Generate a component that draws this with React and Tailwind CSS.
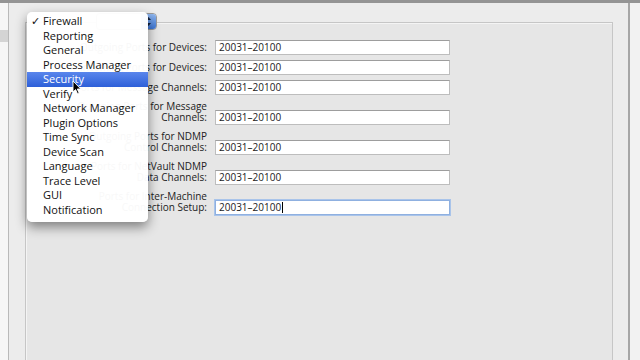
import React from "react";

const rows = [
  { label: ["Outgoing Ports for Devices:"] },
  { label: ["Incoming Ports for Devices:"] },
  { label: ["Ports for Message Channels:"] },
  { label: ["Outgoing Ports for Message", "Channels:"] },
  { label: ["Outgoing Ports for NDMP", "Control Channels:"] },
  { label: ["Ports for NetVault NDMP", "Data Channels:"] },
  { label: ["Ports for Inter-Machine", "Connection Setup:"], focused: true },
];

const menuItems = [
  "Firewall",
  "Reporting",
  "General",
  "Process Manager",
  "Security",
  "Verify",
  "Network Manager",
  "Plugin Options",
  "Time Sync",
  "Device Scan",
  "Language",
  "Trace Level",
  "GUI",
  "Notification",
];

const Field = ({ focused }) => (
  <div
    className={
      focused
        ? "w-[235px] h-[15px] bg-white border border-[#8fb0e0] shadow-[0_0_0_1px_#a9c4ea] flex items-center pl-[3px] text-[10px] text-[#1a1a1a]"
        : "w-[235px] h-[15px] bg-white border border-[#bdbdbd] border-t-[#9d9d9d] flex items-center pl-[3px] text-[10px] text-[#1a1a1a]"
    }
  >
    20031–20100
    {focused && <span className="inline-block w-px h-[11px] bg-black ml-px" />}
  </div>
);

const Row = ({ row, tall }) => (
  <div className={tall ? "flex items-end h-[23px]" : "flex items-end h-[15px]"}>
    <div className="w-[189px] pr-[8px] text-right text-[10px] leading-[11px] text-[#222] pb-[2px]">
      {row.label.map((l, i) => (
        <div key={i} className="whitespace-nowrap">
          {l}
        </div>
      ))}
    </div>
    <Field focused={row.focused} />
  </div>
);

const Cursor = () => (
  <svg
    className="absolute left-[72px] top-[80px]"
    width="10"
    height="15"
    viewBox="0 0 10 15"
  >
    <path
      d="M1 1 L1 12 L3.6 9.6 L5.6 14 L7.2 13.3 L5.3 9 L8.8 9 Z"
      fill="#000"
      stroke="#fff"
      strokeWidth="0.9"
      strokeLinejoin="round"
    />
  </svg>
);

export default function App() {
  return (
    <div
      className="relative w-[640px] h-[360px] overflow-hidden bg-[#ececec] flex flex-col"
      style={{ fontFamily: '"Open Sans", "DejaVu Sans", sans-serif' }}
    >
      <div className="h-[3px] bg-[#949494] shrink-0" />
      <div className="flex flex-1">
        {/* left list strip */}
        <div className="w-[9px] bg-[#f6f6f6] border-r border-[#b9b9b9] flex flex-col">
          <div className="h-[27px]" />
          <div className="h-[12px] bg-[#d4d4d4]" />
        </div>

        {/* main pane */}
        <div className="flex-1 flex flex-col pl-[16px]">
          <div className="h-[19px] shrink-0" />
          <div className="flex-1 flex">
            <div className="w-[588px] bg-[#e6e6e6] border-l border-t border-r border-[#c6c6c6] shadow-[inset_1px_1px_0_#f4f4f4] pt-[17px] flex flex-col">
              <div className="flex flex-col gap-[5px]">
                <Row row={rows[0]} />
                <Row row={rows[1]} />
                <Row row={rows[2]} />
              </div>
              <div className="flex flex-col gap-[7px] mt-[7px]">
                <Row row={rows[3]} tall />
                <Row row={rows[4]} tall />
                <Row row={rows[5]} tall />
                <Row row={rows[6]} tall />
              </div>
            </div>
            <div className="w-[15px]" />
          </div>
        </div>

        {/* right edge */}
        <div className="w-[2px] bg-[#a6a6a6]" />
        <div className="w-[10px] bg-[#f2f2f2]" />
      </div>

      {/* popup button behind the menu */}
      <div className="absolute left-[96px] top-[13px] w-[61px] h-[17px] rounded-[4px] bg-white border border-[#9a9a9a] flex justify-end overflow-hidden">
        <div className="w-[15px] h-full bg-gradient-to-b from-[#8fb6ee] to-[#3e77d6] flex flex-col items-center justify-center">
          <svg width="7" height="11" viewBox="0 0 7 11">
            <path d="M3.5 1 L6 4 L1 4 Z" fill="#10203c" />
            <path d="M3.5 10 L6 7 L1 7 Z" fill="#10203c" />
          </svg>
        </div>
      </div>

      {/* open popup menu */}
      <div className="absolute left-[27px] top-[12px] w-[121px] h-[210px] bg-white/[0.97] rounded-[5px] shadow-[0_5px_12px_rgba(0,0,0,0.45)] pt-[2px] text-[11px] leading-[14.5px] text-[#111]">
        {menuItems.map((item) => {
          const active = item === "Security";
          return (
            <div
              key={item}
              className={
                active
                  ? "relative h-[14.5px] pl-[16px] text-white bg-gradient-to-b from-[#5a86ec] to-[#2d5fd8]"
                  : "relative h-[14.5px] pl-[16px]"
              }
            >
              {item === "Firewall" && (
                <span className="absolute left-[4px] top-0">✓</span>
              )}
              {item}
            </div>
          );
        })}
      </div>

      <Cursor />
    </div>
  );
}
